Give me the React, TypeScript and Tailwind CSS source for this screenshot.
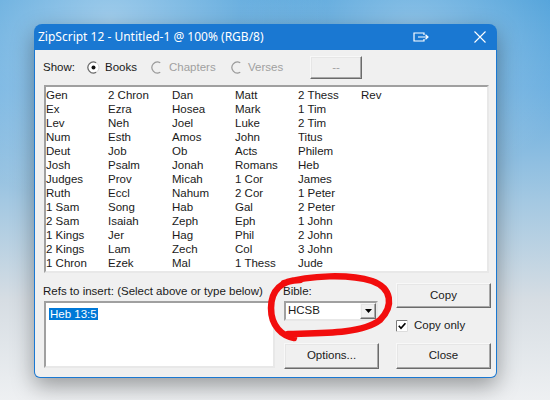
import React from "react";

const books = [
  "Gen","Ex","Lev","Num","Deut","Josh","Judges","Ruth","1 Sam","2 Sam","1 Kings","2 Kings","1 Chron",
  "2 Chron","Ezra","Neh","Esth","Job","Psalm","Prov","Eccl","Song","Isaiah","Jer","Lam","Ezek",
  "Dan","Hosea","Joel","Amos","Ob","Jonah","Micah","Nahum","Hab","Zeph","Hag","Zech","Mal",
  "Matt","Mark","Luke","John","Acts","Romans","1 Cor","2 Cor","Gal","Eph","Phil","Col","1 Thess",
  "2 Thess","1 Tim","2 Tim","Titus","Philem","Heb","James","1 Peter","2 Peter","1 John","2 John","3 John","Jude",
  "Rev",
];

function Radio({ checked, disabled }: { checked?: boolean; disabled?: boolean }) {
  return (
    <svg width="13" height="13" viewBox="0 0 13 13" className="shrink-0">
      {!disabled && <circle cx="6.5" cy="6.5" r="5" fill="#ffffff" />}
      <path d="M9.25 1.74 A5.5 5.5 0 1 0 9.25 11.26" fill="none" stroke={disabled ? "#9a9a9a" : "#6a6a6a"} strokeWidth="1.2" />
      {!disabled && <path d="M9.25 1.74 A5.5 5.5 0 0 1 9.25 11.26" fill="none" stroke="#d8d8d8" strokeWidth="1" />}
      {checked && <circle cx="6.5" cy="6.5" r="2" fill="#111" />}
    </svg>
  );
}

const raised =
  "border border-t-[#f8f8f8] border-l-[#f8f8f8] border-r-[#6b6b6b] border-b-[#6b6b6b] shadow-[inset_-1px_-1px_0_#a8a8a8,inset_1px_1px_0_#e6e6e6] bg-[#f0f0f0]";
const sunken =
  "border-2 border-t-[#a0a0a0] border-l-[#a0a0a0] border-r-[#e8e8e8] border-b-[#e8e8e8] bg-white";

export default function App() {
  return (
    <div className="relative w-[550px] h-[400px] overflow-hidden pl-[34px] pt-[24px] font-['Liberation_Sans',Arial,sans-serif] text-[11.5px] text-[#1a1a1a] bg-[radial-gradient(ellipse_at_20%_5%,rgba(255,255,255,0.45),transparent_35%),radial-gradient(ellipse_at_75%_8%,rgba(255,255,255,0.35),transparent_30%),linear-gradient(180deg,#4b9fd9_0%,#68addf_22%,#a3c8e2_50%,#d6dde3_75%,#eef0f2_100%)]">
      <div className="w-[463px] h-[354px] rounded-t-[8px] rounded-b-[6px] bg-[#1a78d2] px-[1px] pb-[1px] shadow-[0_8px_22px_rgba(0,0,0,0.35)] flex flex-col">
        {/* Title bar */}
        <div className="h-[26px] flex items-center pl-[3px] text-white font-['Noto_Sans',sans-serif] text-[12px]">
          <span>ZipScript 12 - Untitled-1 @ 100% (RGB/8)</span>
          <div className="ml-auto flex items-center">
            <svg width="16" height="10" viewBox="0 0 16 10" className="mr-[45px]">
              <path d="M11 3 V1 H1 V9 H11 V7" fill="none" stroke="#fff" strokeWidth="1.2" />
              <path d="M5 5 H15 M12.5 2.7 L15 5 L12.5 7.3" fill="none" stroke="#fff" strokeWidth="1.2" />
            </svg>
            <svg width="12" height="12" viewBox="0 0 12 12" className="mr-[10px]">
              <path d="M0.5 0.5 L11.5 11.5 M11.5 0.5 L0.5 11.5" stroke="#fff" strokeWidth="1.1" />
            </svg>
          </div>
        </div>
        {/* Body */}
        <div className="flex-1 bg-[#f0f0f0] rounded-b-[5px] pl-[8px] pt-[6px]">
          {/* Show row */}
          <div className="flex items-center h-[23px]">
            <span className="w-[44px]">Show:</span>
            <div className="w-[64px] flex items-center">
              <Radio checked />
              <span className="ml-[5px]">Books</span>
            </div>
            <div className="w-[80px] flex items-center text-[#a0a0a0]">
              <Radio disabled />
              <span className="ml-[5px]">Chapters</span>
            </div>
            <div className="w-[79px] flex items-center text-[#a0a0a0]">
              <Radio disabled />
              <span className="ml-[4px]">Verses</span>
            </div>
            <div className={`w-[52px] h-[23px] flex items-center justify-center text-[#a0a0a0] ${raised}`}>--</div>
          </div>
          {/* List */}
          <div className={`mt-[6px] ml-[1px] w-[445px] h-[188px] pt-[1px] ${sunken}`}>
            <div className="grid grid-flow-col grid-rows-[repeat(13,14px)] grid-cols-[62px_64px_63px_63px_63px_63px] leading-[14px]">
              {books.map((b) => (
                <div key={b} className="whitespace-nowrap">{b}</div>
              ))}
            </div>
          </div>
          {/* Lower section */}
          <div className="mt-[10px] flex">
            <div className="w-[232px] flex flex-col">
              <div className="h-[18px] leading-[16px] whitespace-nowrap">Refs to insert: (Select above or type below)</div>
              <div className={`ml-[1px] w-[231px] h-[67px] pl-[3px] pt-[3px] ${sunken}`}>
                <span className="bg-[#0078d7] text-white leading-[12px] inline-block px-[1px]">Heb 13:5</span>
              </div>
            </div>
            <div className="ml-[8px] w-[96px] flex flex-col">
              <div className="h-[18px] leading-[16px]">Bible:</div>
              <div className={`ml-[1px] w-[94px] h-[20px] flex items-center ${sunken}`}>
                <span className="pl-[2px]">HCSB</span>
                <div className={`ml-auto w-[16px] h-[16px] flex items-center justify-center ${raised}`}>
                  <svg width="7" height="4" viewBox="0 0 7 4">
                    <path d="M0 0 H7 L3.5 4 Z" fill="#000" />
                  </svg>
                </div>
              </div>
              <div className={`mt-[22px] ml-[1px] w-[95px] h-[26px] flex items-center justify-center ${raised}`}>Options...</div>
            </div>
            <div className="ml-[17px] w-[95px] flex flex-col">
              <div className={`h-[25px] flex items-center justify-center ${raised}`}>Copy</div>
              <div className="mt-[12px] h-[12px] flex items-center">
                <svg width="12" height="12" viewBox="0 0 12 12" className="shrink-0">
                  <rect x="0" y="0" width="12" height="12" fill="#fff" />
                  <path d="M0.5 11.5 V0.5 H11.5" fill="none" stroke="#7a7a7a" strokeWidth="1" />
                  <path d="M0.5 11.5 H11.5 V0.5" fill="none" stroke="#dcdcdc" strokeWidth="1" />
                  <path d="M2.8 5.8 L5 8.3 L9.4 3.2" fill="none" stroke="#000" strokeWidth="1.7" />
                </svg>
                <span className="ml-[6px]">Copy only</span>
              </div>
              <div className={`mt-[11px] h-[26px] flex items-center justify-center ${raised}`}>Close</div>
            </div>
          </div>
        </div>
      </div>
      {/* Red hand-drawn annotation */}
      <svg className="absolute left-0 top-0 pointer-events-none" width="550" height="400" viewBox="0 0 550 400">
        <path
          d="M300 280 C282 280 271 290 271 308 C271 326 282 336 294 338 M288 334 C320 333 362 334 380 320 C394 306 392 288 372 281 C350 274 310 275 284 283"
          fill="none"
          stroke="#f20d0d"
          strokeWidth="6.5"
          strokeLinecap="round"
          strokeLinejoin="round"
        />
      </svg>
    </div>
  );
}
